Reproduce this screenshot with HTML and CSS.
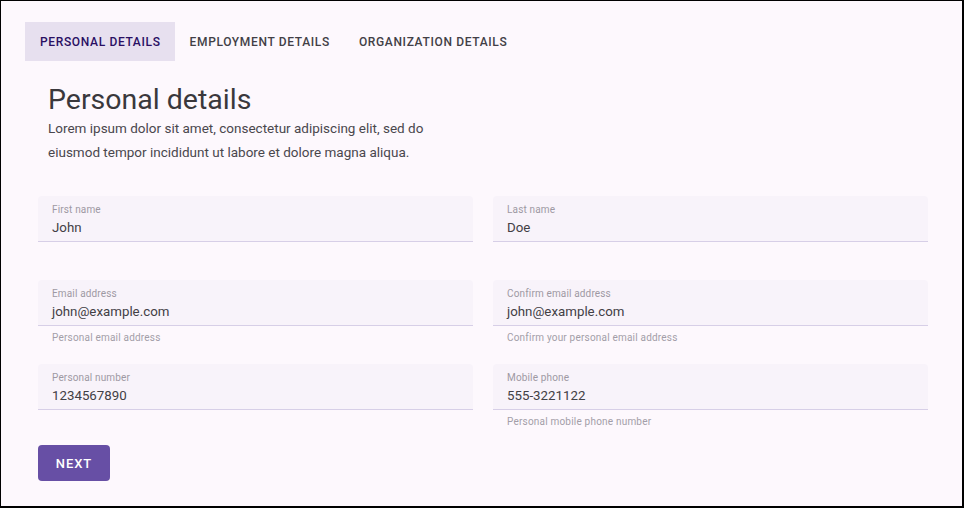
FILE: index.html
```html
<!DOCTYPE html>
<html lang="en">
<head>
<meta charset="utf-8">
<title>Personal details</title>
<link rel="stylesheet" href="styles.css">
</head>
<body>
<div class="frame">
  <nav class="tabs">
    <div class="tab active">Personal details</div>
    <div class="tab">Employment details</div>
    <div class="tab">Organization details</div>
  </nav>
  <section class="intro">
    <h1>Personal details</h1>
    <p>Lorem ipsum dolor sit amet, consectetur adipiscing elit, sed do eiusmod tempor incididunt ut labore et dolore magna aliqua.</p>
  </section>
  <form class="form">
    <div class="grid">
      <div class="cell">
        <div class="field"><span class="label">First name</span><span class="value">John</span></div>
        <div class="hint"></div>
      </div>
      <div class="cell">
        <div class="field"><span class="label">Last name</span><span class="value">Doe</span></div>
        <div class="hint"></div>
      </div>
      <div class="cell">
        <div class="field"><span class="label">Email address</span><span class="value">john@example.com</span></div>
        <div class="hint">Personal email address</div>
      </div>
      <div class="cell">
        <div class="field"><span class="label">Confirm email address</span><span class="value">john@example.com</span></div>
        <div class="hint">Confirm your personal email address</div>
      </div>
      <div class="cell">
        <div class="field"><span class="label">Personal number</span><span class="value">1234567890</span></div>
        <div class="hint"></div>
      </div>
      <div class="cell">
        <div class="field"><span class="label">Mobile phone</span><span class="value">555-3221122</span></div>
        <div class="hint">Personal mobile phone number</div>
      </div>
    </div>
    <button type="button" class="next">Next</button>
  </form>
</div>
</body>
</html>
```

FILE: styles.css
```css
html, body {
  margin: 0;
  padding: 0;
}

body {
  font-family: Roboto, "Liberation Sans", sans-serif;
}

.frame {
  width: 964px;
  height: 508px;
  box-sizing: border-box;
  border: 1px solid #000;
  border-right-width: 2px;
  border-bottom-width: 2px;
  background: #fdf8fd;
  padding: 21px 0 0 24px;
}

.tabs {
  display: flex;
  height: 39px;
}

.tab {
  display: flex;
  align-items: center;
  padding: 0 14px 0 15px;
  font-size: 12px;
  font-weight: 500;
  letter-spacing: 0.65px;
  text-transform: uppercase;
  color: #423f46;
}

.tab.active {
  background: #e7e0ef;
  color: #2a0f63;
}

.intro {
  margin-left: 23px;
}

.intro h1 {
  margin: 23px 0 0;
  font-size: 28.5px;
  line-height: 32px;
  font-weight: 400;
  color: #3a383c;
}

.intro p {
  margin: 0;
  max-width: 400px;
  font-size: 13.5px;
  line-height: 24px;
  color: #4a474d;
}

.form {
  margin: 32px 0 0 13px;
}

.grid {
  display: grid;
  grid-template-columns: 435px 435px;
  column-gap: 20px;
  row-gap: 16px;
}

.field {
  display: flex;
  flex-direction: column;
  box-sizing: border-box;
  height: 46px;
  padding: 8px 14px 0;
  background: #f8f3fa;
  border-bottom: 1px solid #d7cfe7;
  border-radius: 4px 4px 0 0;
}

.label {
  font-size: 10px;
  line-height: 12px;
  letter-spacing: 0.15px;
  color: #9e99a3;
}

.value {
  margin-top: 2px;
  font-size: 13.3px;
  line-height: 20px;
  color: #424045;
}

.hint {
  box-sizing: border-box;
  height: 22px;
  padding: 6px 14px 0;
  font-size: 10px;
  line-height: 12px;
  letter-spacing: 0.2px;
  color: #a39ea8;
}

.next {
  display: block;
  margin-top: 13px;
  width: 72px;
  height: 36px;
  padding: 0;
  border: none;
  border-radius: 4px;
  background: #674fa5;
  color: #fff;
  font-family: Roboto, "Liberation Sans", sans-serif;
  font-size: 13px;
  font-weight: 500;
  letter-spacing: 0.9px;
  text-transform: uppercase;
}
```
